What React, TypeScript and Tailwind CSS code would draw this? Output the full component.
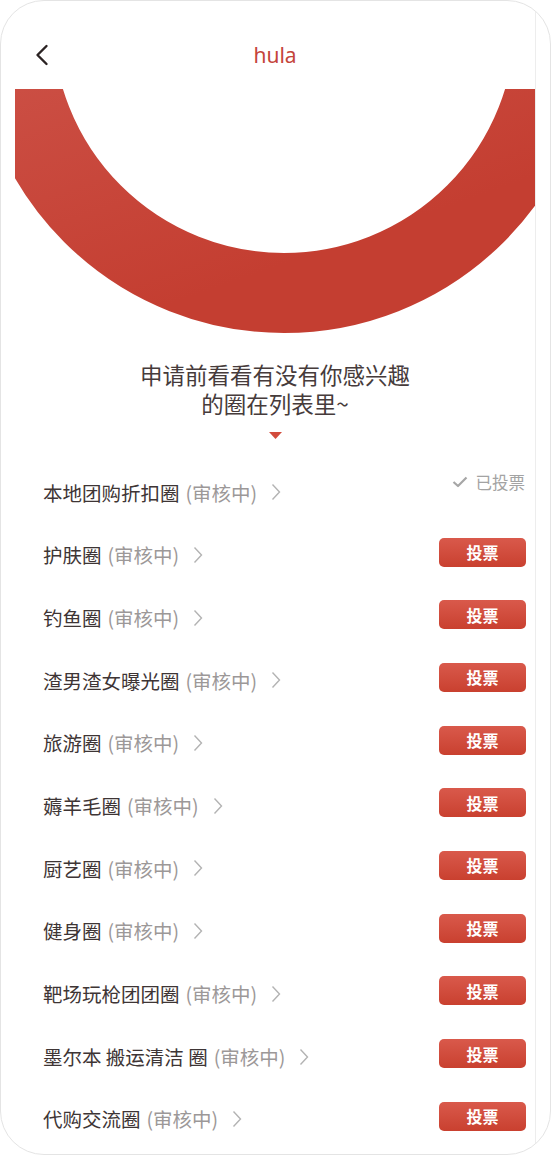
import { ChevronLeft } from 'lucide-react';

const circles = [
  { name: '本地团购折扣圈', voted: true },
  { name: '护肤圈' },
  { name: '钓鱼圈' },
  { name: '渣男渣女曝光圈' },
  { name: '旅游圈' },
  { name: '薅羊毛圈' },
  { name: '厨艺圈' },
  { name: '健身圈' },
  { name: '靶场玩枪团团圈' },
  { name: '墨尔本 搬运清洁 圈' },
  { name: '代购交流圈' },
];

const cjk = { fontFamily: '"Noto Sans CJK SC", "Noto Sans", sans-serif' };

function RowChevron() {
  return (
    <svg width="10" height="18" viewBox="0 0 10 18" className="ml-[14px] shrink-0">
      <polyline points="1.5,1.5 8.5,9 1.5,16.5" fill="none" stroke="#b3b3b3" strokeWidth="1.4" />
    </svg>
  );
}

function CircleRow({ name, voted }: { name: string; voted?: boolean }) {
  return (
    <div className="h-[62.7px] flex items-center justify-between pl-[28px] pr-[9px]">
      <div className="flex items-center text-[19.5px] leading-none">
        <span className="text-[#3e3535]">{name}</span>
        <span className="text-[#9c9898] ml-[6px]">(审核中)</span>
        <RowChevron />
      </div>
      {voted ? (
        <div className="flex items-center gap-[8px] text-[16.5px] text-[#a3a3a3] -mt-[20px] pr-[1px]">
          <svg width="16" height="12" viewBox="0 0 16 12">
            <polyline points="1.5,6 6,10 14.5,1.5" fill="none" stroke="#a6a6a6" strokeWidth="2.2" strokeLinejoin="round" />
          </svg>
          <span>已投票</span>
        </div>
      ) : (
        <button className="w-[87px] h-[29px] -mt-[6px] rounded-[5px] bg-gradient-to-b from-[#d9594b] to-[#c9402f] text-white text-[16px] font-bold flex items-center justify-center">
          投票
        </button>
      )}
    </div>
  );
}

export default function App() {
  return (
    <div className="w-[551px] h-[1155px] bg-white">
      <div className="w-full h-full border border-[#e4e4e4] rounded-[44px] overflow-hidden" style={cjk}>
        <div className="mx-[14px] h-full border-r border-[#ededed] flex flex-col">
          <header className="h-[88px] pt-[22px] relative flex items-center justify-center shrink-0">
            <ChevronLeft className="absolute left-[9px] top-[36px] text-[#2b2323]" size={36} strokeWidth={1.6} />
            <span className="text-[21px] text-[#c4443a]" style={{ fontFamily: '"Noto Sans", sans-serif' }}>
              hula
            </span>
          </header>

          <div className="h-[244px] overflow-hidden shrink-0">
            <svg width="522" height="244" viewBox="0 0 522 244">
              <defs>
                <linearGradient id="ring" x1="0" y1="0" x2="0.35" y2="1">
                  <stop offset="0" stopColor="#d4625a" />
                  <stop offset="1" stopColor="#c43e31" />
                </linearGradient>
              </defs>
              <circle cx="269" cy="-67" r="271" fill="none" stroke="url(#ring)" strokeWidth="80" />
            </svg>
          </div>

          <div className="mt-[27px] text-center text-[22.5px] leading-[29px] text-[#463b3b]">
            <p>申请前看看有没有你感兴趣</p>
            <p>的圈在列表里~</p>
          </div>
          <div className="flex justify-center mt-[14px]">
            <svg width="13" height="7" viewBox="0 0 13 7">
              <polygon points="0,0 13,0 6.5,7" fill="#d24b3c" />
            </svg>
          </div>

          <div className="mt-[22px]">
            {circles.map((c) => (
              <CircleRow key={c.name} name={c.name} voted={c.voted} />
            ))}
          </div>
        </div>
      </div>
    </div>
  );
}
